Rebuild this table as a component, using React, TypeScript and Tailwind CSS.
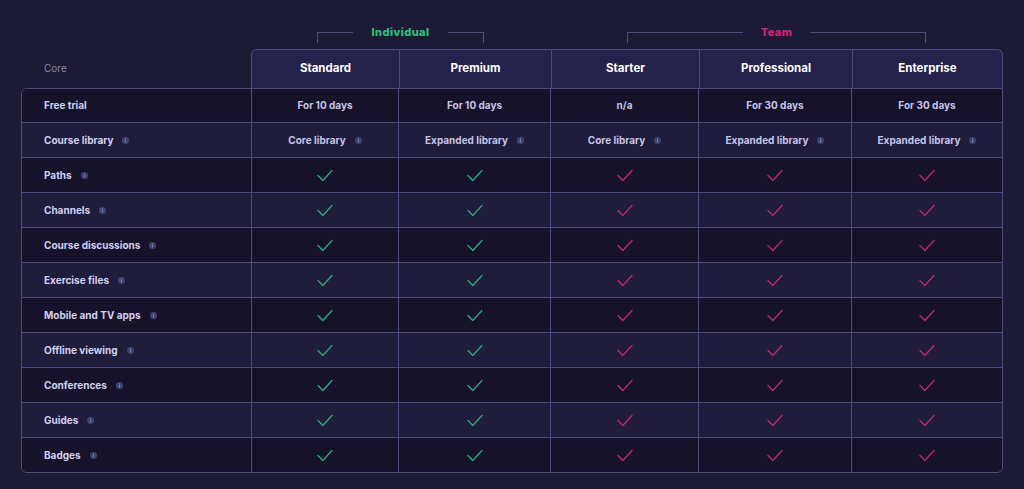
import React from "react";

type Cell = string | { text: string; info?: boolean } | "check";

const plans = ["Standard", "Premium", "Starter", "Professional", "Enterprise"];
const cols = "grid-cols-[229px_147px_152px_148px_153px_151px]";

const rows: { label: string; info: boolean; cells: Cell[] }[] = [
  { label: "Free trial", info: false, cells: ["For 10 days", "For 10 days", "n/a", "For 30 days", "For 30 days"] },
  {
    label: "Course library",
    info: true,
    cells: [
      { text: "Core library", info: true },
      { text: "Expanded library", info: true },
      { text: "Core library", info: true },
      { text: "Expanded library", info: true },
      { text: "Expanded library", info: true },
    ],
  },
  ...[
    "Paths",
    "Channels",
    "Course discussions",
    "Exercise files",
    "Mobile and TV apps",
    "Offline viewing",
    "Conferences",
    "Guides",
    "Badges",
  ].map((label) => ({ label, info: true, cells: Array(5).fill("check") as Cell[] })),
];

function Info() {
  return (
    <svg width="7" height="7" viewBox="0 0 7 7" className="ml-[9px] shrink-0">
      <circle cx="3.5" cy="3.5" r="3.5" fill="#3f4470" />
      <rect x="3" y="2.8" width="1" height="2.6" fill="#7d83b0" />
      <rect x="3" y="1.4" width="1" height="0.9" fill="#7d83b0" />
    </svg>
  );
}

function Check({ team }: { team: boolean }) {
  return (
    <svg width="16" height="13" viewBox="0 0 16 13" fill="none">
      <path
        d="M1 6.5 L5.8 11.5 L15 1.5"
        stroke={team ? "#b92a74" : "#2da67c"}
        strokeWidth="1.4"
        strokeLinecap="round"
        strokeLinejoin="round"
      />
    </svg>
  );
}

function Group({ name, color, width, inset }: { name: string; color: string; width: string; inset: string }) {
  return (
    <div className={`${width} ${inset} flex items-start`}>
      <div className="h-[11px] flex-1 border-l border-t border-[#4d4b80]" />
      <span className={`-mt-[7px] px-[18px] text-[11px] font-extrabold leading-[14px] tracking-[0.04em] ${color}`}>
        {name}
      </span>
      <div className="h-[11px] flex-1 border-r border-t border-[#4d4b80]" />
    </div>
  );
}

export default function App() {
  return (
    <div
      className="h-[489px] w-[1024px] overflow-hidden bg-[#1d1a35] pl-[21px] pt-[32px]"
      style={{ fontFamily: "Inter, 'Noto Sans', sans-serif" }}
    >
      {/* group brackets */}
      <div className="flex h-[17px] pl-[230px]">
        <Group name="Individual" color="text-[#2cc07c]" width="w-[299px]" inset="px-[66px]" />
        <Group name="Team" color="text-[#d3237c]" width="w-[453px]" inset="px-[77px]" />
      </div>

      {/* plan header */}
      <div className="flex h-[39px] w-[982px]">
        <div className="flex w-[230px] items-center pl-[23px] text-[10px] text-[#8b88ae]">Core</div>
        <div className="grid flex-1 grid-cols-[147px_152px_148px_153px_1fr] rounded-t-md border-x border-t border-[#4d4b80] bg-[#24214a]">
          {plans.map((p, i) => (
            <div
              key={p}
              className={`flex items-center justify-center text-[11.5px] font-bold text-white ${i > 0 ? "border-l border-[#4d4b80]" : ""}`}
            >
              {p}
            </div>
          ))}
        </div>
      </div>

      {/* body */}
      <div className="w-[982px] overflow-hidden rounded-b-md rounded-tl-md border border-[#4d4b80]">
        {rows.map((r, ri) => (
          <div
            key={r.label}
            className={`grid ${cols} ${ri === 0 ? "h-[33px]" : "h-[35px] border-t border-[#4d4b80]"} ${
              ri % 2 === 0 ? "bg-[#15122a]" : "bg-[#1f1c3c]"
            }`}
          >
            <div className="flex items-center pl-[22px] text-[10px] font-bold text-[#d2d0f0]">
              {r.label}
              {r.info && <Info />}
            </div>
            {r.cells.map((c, ci) => (
              <div
                key={ci}
                className="flex items-center justify-center border-l border-[#4d4b80] text-[10px] font-bold text-[#c6c3e8]"
              >
                {c === "check" ? (
                  <Check team={ci >= 2} />
                ) : typeof c === "string" ? (
                  c
                ) : (
                  <>
                    {c.text}
                    {c.info && <Info />}
                  </>
                )}
              </div>
            ))}
          </div>
        ))}
      </div>
    </div>
  );
}
